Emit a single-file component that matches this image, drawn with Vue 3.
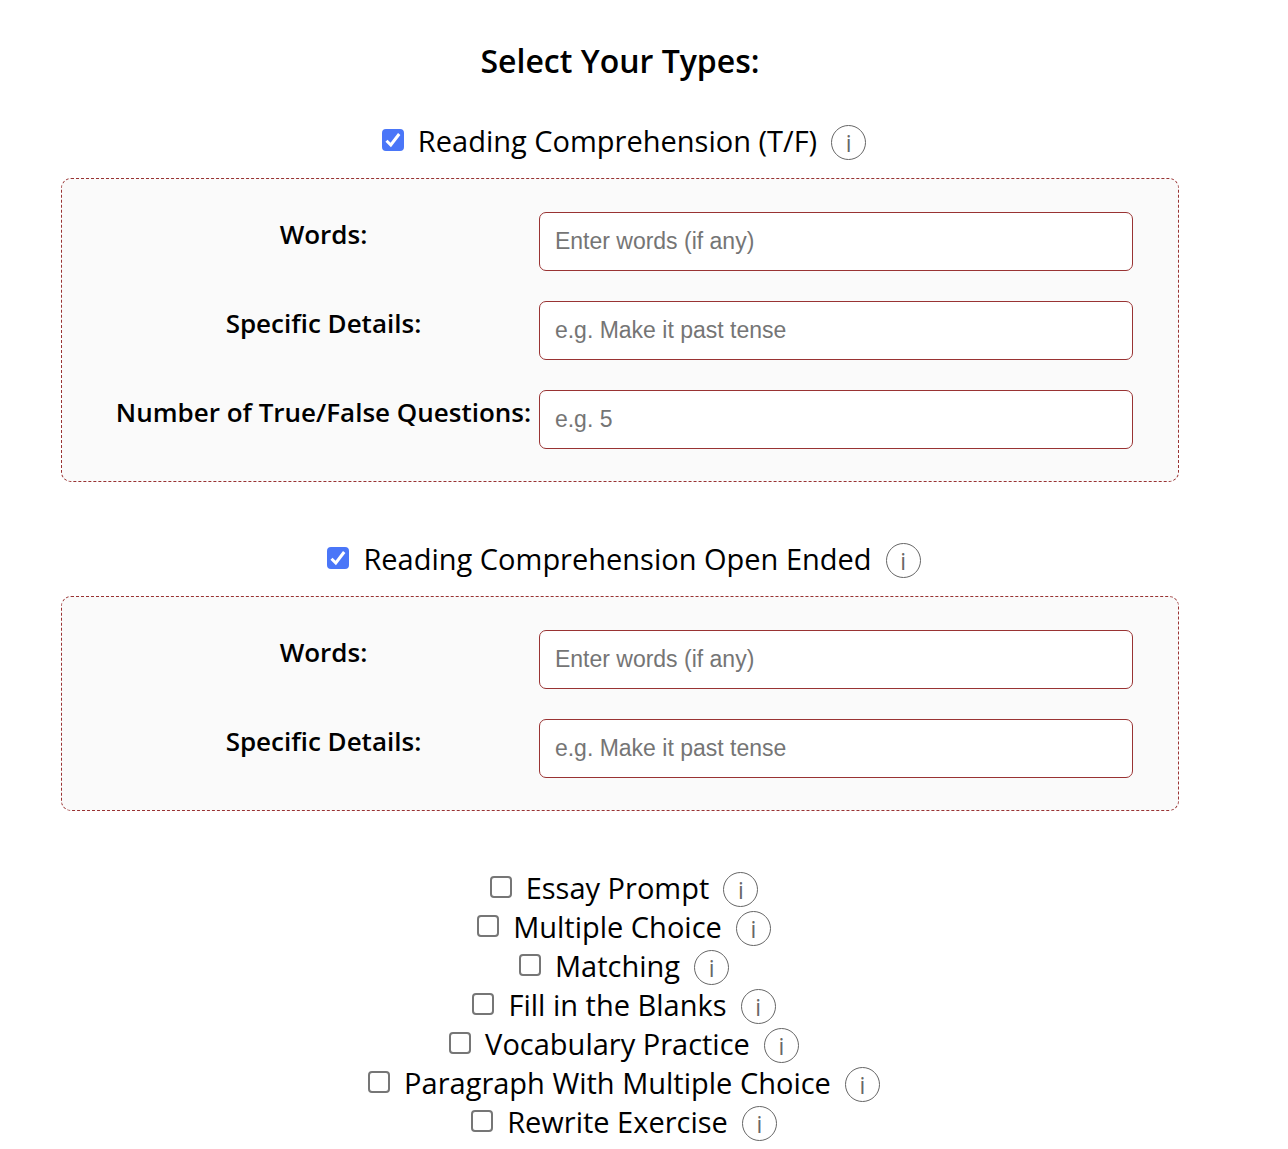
<script setup>
import { reactive } from 'vue'

const words = { key: 'words', label: 'Words:', placeholder: 'Enter words (if any)' }
const details = { key: 'details', label: 'Specific Details:', placeholder: 'e.g. Make it past tense' }
const count = { key: 'count', label: 'Number of True/False Questions:', placeholder: 'e.g. 5' }

const types = reactive([
  { id: 'tf', name: 'Reading Comprehension (T/F)', checked: true, fields: [words, details, count] },
  { id: 'open', name: 'Reading Comprehension Open Ended', checked: true, fields: [words, details] },
  { id: 'essay', name: 'Essay Prompt', checked: false, fields: [] },
  { id: 'choice', name: 'Multiple Choice', checked: false, fields: [] },
  { id: 'matching', name: 'Matching', checked: false, fields: [] },
  { id: 'blanks', name: 'Fill in the Blanks', checked: false, fields: [] },
  { id: 'vocabulary', name: 'Vocabulary Practice', checked: false, fields: [] },
  { id: 'paragraph', name: 'Paragraph With Multiple Choice', checked: false, fields: [] },
  { id: 'rewrite', name: 'Rewrite Exercise', checked: false, fields: [] },
])
</script>

<template>
  <main class="page">
    <h1 class="title">Select Your Types:</h1>
    <section v-for="type in types" :key="type.id">
      <div class="option">
        <span class="tick">
          <input :id="type.id" v-model="type.checked" class="tick-input" type="checkbox" />
          <svg v-if="type.checked" class="tick-mark" viewBox="0 0 22 22" aria-hidden="true">
            <path d="M4.5 11.8 L8.8 16 L17.2 5" />
          </svg>
        </span>
        <label class="option-label" :for="type.id">{{ type.name }}</label>
        <button class="info" type="button">i</button>
      </div>
      <div v-if="type.checked && type.fields.length" class="panel">
        <div v-for="field in type.fields" :key="field.key" class="field">
          <label class="field-label" :for="type.id + '-' + field.key">{{ field.label }}</label>
          <input
            :id="type.id + '-' + field.key"
            class="field-input"
            type="text"
            :placeholder="field.placeholder"
          />
        </div>
      </div>
    </section>
  </main>
</template>

<style>
body {
  background: #fff;
}
</style>

<style scoped>
.page {
  box-sizing: border-box;
  padding: 39px 109px 6px 61px;
  font-family: "Open Sans", sans-serif;
  color: #000;
}

.title {
  margin: 0 0 40px;
  font-size: 32px;
  font-weight: 600;
  line-height: 44px;
  text-align: center;
}

.option {
  display: flex;
  align-items: center;
  justify-content: center;
  height: 39px;
}

.option-label {
  padding-bottom: 4px;
  font-size: 29px;
  line-height: 35px;
}

.tick {
  position: relative;
  width: 22px;
  height: 22px;
  margin: 0 14px 6px 8px;
}

.tick-input {
  display: block;
  box-sizing: border-box;
  width: 22px;
  height: 22px;
  margin: 0;
  appearance: none;
  border: 2px solid #767676;
  border-radius: 4px;
  background: #fff;
}

.tick-input:checked {
  border-color: #4a76f8;
  background: #4a76f8;
}

.tick-mark {
  position: absolute;
  inset: 0;
  fill: none;
  stroke: #fff;
  stroke-width: 3;
  pointer-events: none;
}

.info {
  box-sizing: border-box;
  width: 35px;
  height: 35px;
  margin-left: 14px;
  padding: 1px 0 0;
  border: 1px solid #666;
  border-radius: 50%;
  background: transparent;
  color: #666;
  font-family: inherit;
  font-size: 23px;
  line-height: 31px;
}

.panel {
  display: flex;
  flex-direction: column;
  gap: 30px;
  margin: 16px 0 59px;
  padding: 33px 45px 32px;
  border: 1px dashed #993333;
  border-radius: 10px;
  background: #fafafa;
}

.field {
  display: flex;
  align-items: center;
}

.field-label {
  flex: 0 0 42%;
  padding: 0 0 16px 1px;
  font-size: 26px;
  font-weight: 600;
  line-height: 36px;
  text-align: center;
  white-space: nowrap;
}

.field-input {
  box-sizing: border-box;
  flex: 1;
  min-width: 0;
  height: 59px;
  padding: 0 15px;
  border: 1px solid #993333;
  border-radius: 7px;
  background: #fff;
  font-family: "Liberation Sans", Arial, sans-serif;
  font-size: 23px;
}

.field-input::placeholder {
  color: #757575;
}
</style>
